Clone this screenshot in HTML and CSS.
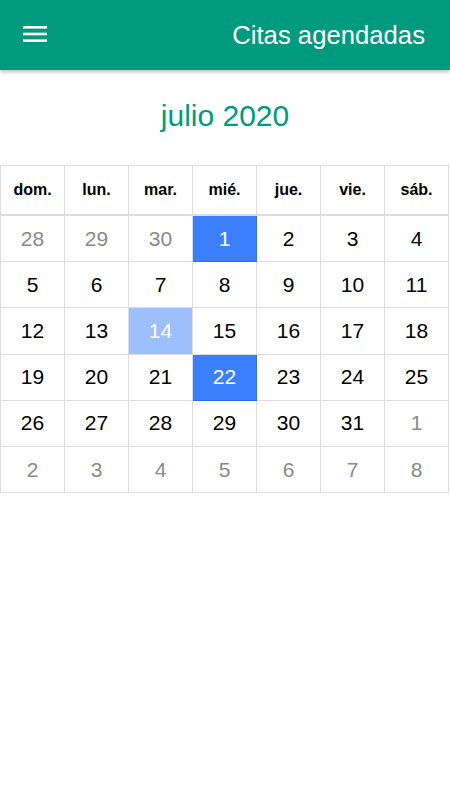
FILE: index.html
```html
<!DOCTYPE html>
<html lang="es">
<head>
  <meta charset="UTF-8" />
  <meta name="viewport" content="width=device-width, initial-scale=1.0" />
  <title>Citas agendadas</title>
  <link rel="stylesheet" href="styles.css">
</head>
<body>
  <header class="toolbar">
    <button class="menu-btn" aria-label="Menú">
      <svg width="24" height="24" viewBox="0 0 24 24">
        <rect x="0" y="4" width="24" height="2.6" fill="#fff" />
        <rect x="0" y="10.7" width="24" height="2.6" fill="#fff" />
        <rect x="0" y="17.4" width="24" height="2.6" fill="#fff" />
      </svg>
    </button>
    <span class="toolbar-title">Citas agendadas</span>
  </header>

  <h2 class="month">julio 2020</h2>

  <table class="calendar">
    <thead>
      <tr>
        <th>dom.</th>
        <th>lun.</th>
        <th>mar.</th>
        <th>mié.</th>
        <th>jue.</th>
        <th>vie.</th>
        <th>sáb.</th>
      </tr>
    </thead>
    <tbody></tbody>
  </table>

  <script>
    // julio 2020 starts on a Wednesday
    const days = [];
    [28, 29, 30].forEach(d => days.push({ n: d, other: true }));
    for (let d = 1; d <= 31; d++) days.push({ n: d });
    for (let d = 1; d <= 8; d++) days.push({ n: d, other: true });

    const selected = { 1: "picked", 22: "picked", 14: "today" };
    const tbody = document.querySelector(".calendar tbody");

    for (let w = 0; w < 6; w++) {
      const row = document.createElement("tr");
      days.slice(w * 7, w * 7 + 7).forEach(day => {
        const cell = document.createElement("td");
        cell.textContent = day.n;
        if (day.other) cell.className = "other";
        else if (selected[day.n]) cell.className = selected[day.n];
        row.appendChild(cell);
      });
      tbody.appendChild(row);
    }
  </script>
</body>
</html>
```

FILE: styles.css
```css
body {
  font-family: "Liberation Sans", Arial, sans-serif;
  background: #fff;
  margin: 0;
  color: #000;
}

.toolbar {
  display: flex;
  align-items: center;
  justify-content: space-between;
  height: 70px;
  padding: 0 25px 0 23px;
  background-color: #009a7f;
  color: #fff;
  box-shadow: 0 2px 4px rgba(0, 0, 0, 0.25);
}

.menu-btn {
  display: flex;
  padding: 0;
  border: none;
  background: none;
  margin-top: -2px;
}

.toolbar-title {
  font-size: 25.7px;
}

.month {
  margin: 29px 0 32px;
  text-align: center;
  font-size: 30px;
  font-weight: normal;
  color: #009a7f;
}

.calendar {
  width: 449px;
  border-collapse: collapse;
  table-layout: fixed;
}

.calendar th,
.calendar td {
  border: 1px solid #ddd;
  text-align: center;
  padding: 0;
}

.calendar th {
  height: 48px;
  font-size: 16px;
  font-weight: bold;
  border-bottom-width: 2px;
}

.calendar td {
  height: 45.2px;
  font-size: 21px;
}

.calendar td.other {
  color: #8a8a8a;
}

.calendar td.picked {
  background-color: #3b7ffc;
  border-color: #2f6fe6;
  color: #fff;
}

.calendar td.today {
  background-color: #9dbffc;
  color: #fff;
}
```
